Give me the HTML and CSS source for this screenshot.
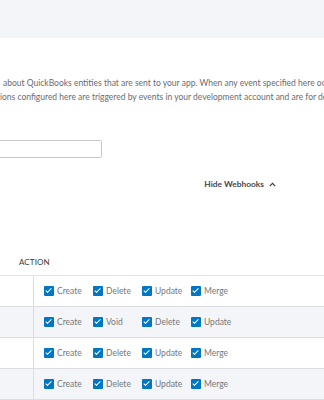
FILE: index.html
```html
<!DOCTYPE html>
<html lang="en">
<head>
<meta charset="utf-8">
<title>Webhooks</title>
<link rel="stylesheet" href="styles.css">
</head>
<body>
<div class="topbar"></div>
<section class="intro">
  <p class="desc">
    <span class="line first">about QuickBooks entities that are sent to your app. When any event specified here occurs</span>
    <span class="line">ions configured here are triggered by events in your development account and are for development</span>
  </p>
  <div class="field"></div>
  <div class="toggle-row">
    <span class="toggle">Hide Webhooks
      <svg class="chev" width="7" height="5" viewBox="0 0 7 5"><path d="M0.8 4.2 L3.5 1.4 L6.2 4.2" fill="none" stroke="#393a3d" stroke-width="1.1"/></svg>
    </span>
  </div>
</section>
<div class="table">
  <div class="thead"><span class="th">ACTION</span></div>
  <div class="row">
    <div class="entity"></div>
    <div class="actions">
      <label class="opt"><span class="cb"></span>Create</label>
      <label class="opt"><span class="cb"></span>Delete</label>
      <label class="opt"><span class="cb"></span>Update</label>
      <label class="opt"><span class="cb"></span>Merge</label>
    </div>
  </div>
  <div class="row alt">
    <div class="entity"></div>
    <div class="actions">
      <label class="opt"><span class="cb"></span>Create</label>
      <label class="opt"><span class="cb"></span>Void</label>
      <label class="opt"><span class="cb"></span>Delete</label>
      <label class="opt"><span class="cb"></span>Update</label>
    </div>
  </div>
  <div class="row">
    <div class="entity"></div>
    <div class="actions">
      <label class="opt"><span class="cb"></span>Create</label>
      <label class="opt"><span class="cb"></span>Delete</label>
      <label class="opt"><span class="cb"></span>Update</label>
      <label class="opt"><span class="cb"></span>Merge</label>
    </div>
  </div>
  <div class="row alt">
    <div class="entity"></div>
    <div class="actions">
      <label class="opt"><span class="cb"></span>Create</label>
      <label class="opt"><span class="cb"></span>Delete</label>
      <label class="opt"><span class="cb"></span>Update</label>
      <label class="opt"><span class="cb"></span>Merge</label>
    </div>
  </div>
</div>
</body>
</html>
```
FILE: styles.css
```css
* { box-sizing: border-box; }
html, body { margin: 0; padding: 0; background: #fff; }
body {
  width: 324px;
  height: 400px;
  overflow: hidden;
  font-family: Lato, "Open Sans", sans-serif;
  color: #6b6c72;
}
.topbar {
  height: 38px;
  background: #f4f5f8;
}
.intro { padding-top: 38px; }
.desc {
  margin: 0;
  font-size: 8.5px;
  line-height: 14px;
  color: #6b6c72;
  white-space: nowrap;
  overflow: hidden;
}
.desc .line { display: block; }
.desc .first { padding-left: 3px; }
.field {
  margin-top: 36px;
  margin-left: -4px;
  width: 106px;
  height: 18px;
  border: 1px solid #c8c9cc;
  border-radius: 2px;
  background: #fff;
}
.toggle-row {
  margin-top: 19px;
  height: 14px;
  display: flex;
  justify-content: flex-end;
  align-items: center;
  padding-right: 48px;
}
.toggle {
  display: flex;
  align-items: center;
  gap: 5px;
  font-size: 8.4px;
  font-weight: 700;
  color: #46474b;
}
.chev { display: block; }
.table { margin-top: 58px; }
.thead {
  height: 27px;
  border-bottom: 1px solid #e3e4e7;
  display: flex;
  align-items: center;
  padding-left: 19px;
  padding-bottom: 1px;
}
.th {
  font-size: 8px;
  color: #393a3d;
  letter-spacing: 0.1px;
}
.row {
  height: 31px;
  border-bottom: 1px solid #dcdde0;
  display: flex;
  background: #fff;
}
.row.alt { background: #f4f5f8; }
.entity {
  width: 34px;
  border-right: 1px solid #dcdde0;
}
.actions {
  display: grid;
  grid-template-columns: repeat(4, 49px);
  align-items: center;
  padding-left: 10px;
}
.opt {
  display: flex;
  align-items: center;
  gap: 3px;
  font-size: 8.5px;
  color: #76777b;
}
.cb {
  position: relative;
  width: 10px;
  height: 10px;
  border-radius: 1px;
  background: #0077c5;
  flex: none;
}
.cb::after {
  content: "";
  position: absolute;
  left: 3.3px;
  top: 1.2px;
  width: 2.4px;
  height: 5px;
  border: solid #fff;
  border-width: 0 1.4px 1.4px 0;
  transform: rotate(45deg);
}
```
